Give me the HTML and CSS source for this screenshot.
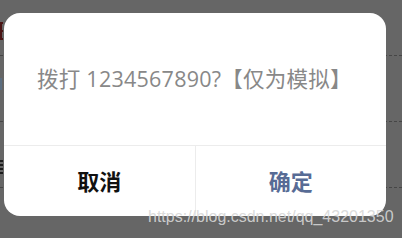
FILE: index.html
```html
<!DOCTYPE html>
<html lang="zh-CN">
<head>
  <meta charset="UTF-8" />
  <meta name="viewport" content="width=device-width, initial-scale=1" />
  <title>拨打电话</title>
  <link rel="stylesheet" href="styles.css">
</head>
<body>
  <div class="page">
    <div class="row row-first"><span class="peek peek-red"></span></div>
    <div class="row"><span class="peek peek-blue"></span></div>
    <div class="row"><span class="peek peek-dark"></span></div>
    <div class="row row-last"></div>
  </div>

  <div class="dialog">
    <div class="msg">拨打 1234567890?【仅为模拟】</div>
    <div class="btns">
      <div class="btn btn-cancel">取消</div>
      <div class="btn btn-ok">确定</div>
    </div>
  </div>

  <div class="watermark">https://blog.csdn.net/qq_43201350</div>
</body>
</html>
```

FILE: styles.css
```css
body {
  margin: 0;
  width: 402px;
  height: 238px;
  overflow: hidden;
  background: #666;
  font-family: "Noto Sans CJK SC", "Noto Sans", sans-serif;
  position: relative;
}
.page { width: 402px; }
.row {
  height: 65px;
  border-bottom: 1px dashed #464646;
  overflow: hidden;
  display: flex;
  align-items: center;
}
.row-first { height: 55px; }
.row-last { height: 50px; border-bottom: none; }

/* clipped glyph edges of the page behind the mask */
.peek { display: block; width: 3px; }
.peek-red {
  height: 18px;
  margin-top: 6px;
  border-left: 2px solid #4a1414;
  background: linear-gradient(#4a1414 0 2px, transparent 2px 8px, #4a1414 8px 10px, transparent 10px 16px, #4a1414 16px);
  width: 1px;
}
.peek-blue {
  height: 12px;
  margin-top: -10px;
  border-left: 2px solid #5c6e80;
  width: 0;
}
.peek-dark {
  height: 14px;
  margin-top: 24px;
  width: 3px;
  background: repeating-linear-gradient(#1c1c1c 0 2px, transparent 2px 4px);
}

.dialog {
  position: absolute;
  left: 4px;
  top: 13px;
  width: 382px;
  height: 203px;
  background: #fff;
  border-radius: 16px;
  overflow: hidden;
  display: flex;
  flex-direction: column;
}
.msg {
  flex: 1;
  display: flex;
  align-items: center;
  padding: 0 0 4px 33px;
  font-family: "Open Sans", "Noto Sans CJK SC", sans-serif;
  font-size: 21.5px;
  letter-spacing: 0.25px;
  color: #888;
  white-space: nowrap;
}
.btns {
  height: 70px;
  border-top: 1px solid #ececec;
  display: flex;
}
.btn {
  flex: 1;
  display: flex;
  align-items: center;
  justify-content: center;
  font-size: 22px;
  font-weight: bold;
  padding-bottom: 2px;
}
.btn-cancel { color: #111; }
.btn-ok {
  color: #576b95;
  border-left: 1px solid #ececec;
}
.watermark {
  position: absolute;
  left: 148px;
  top: 208px;
  font-family: "Liberation Sans", Arial, sans-serif;
  font-size: 16px;
  color: rgba(215, 215, 215, 0.9);
  white-space: nowrap;
}
```
